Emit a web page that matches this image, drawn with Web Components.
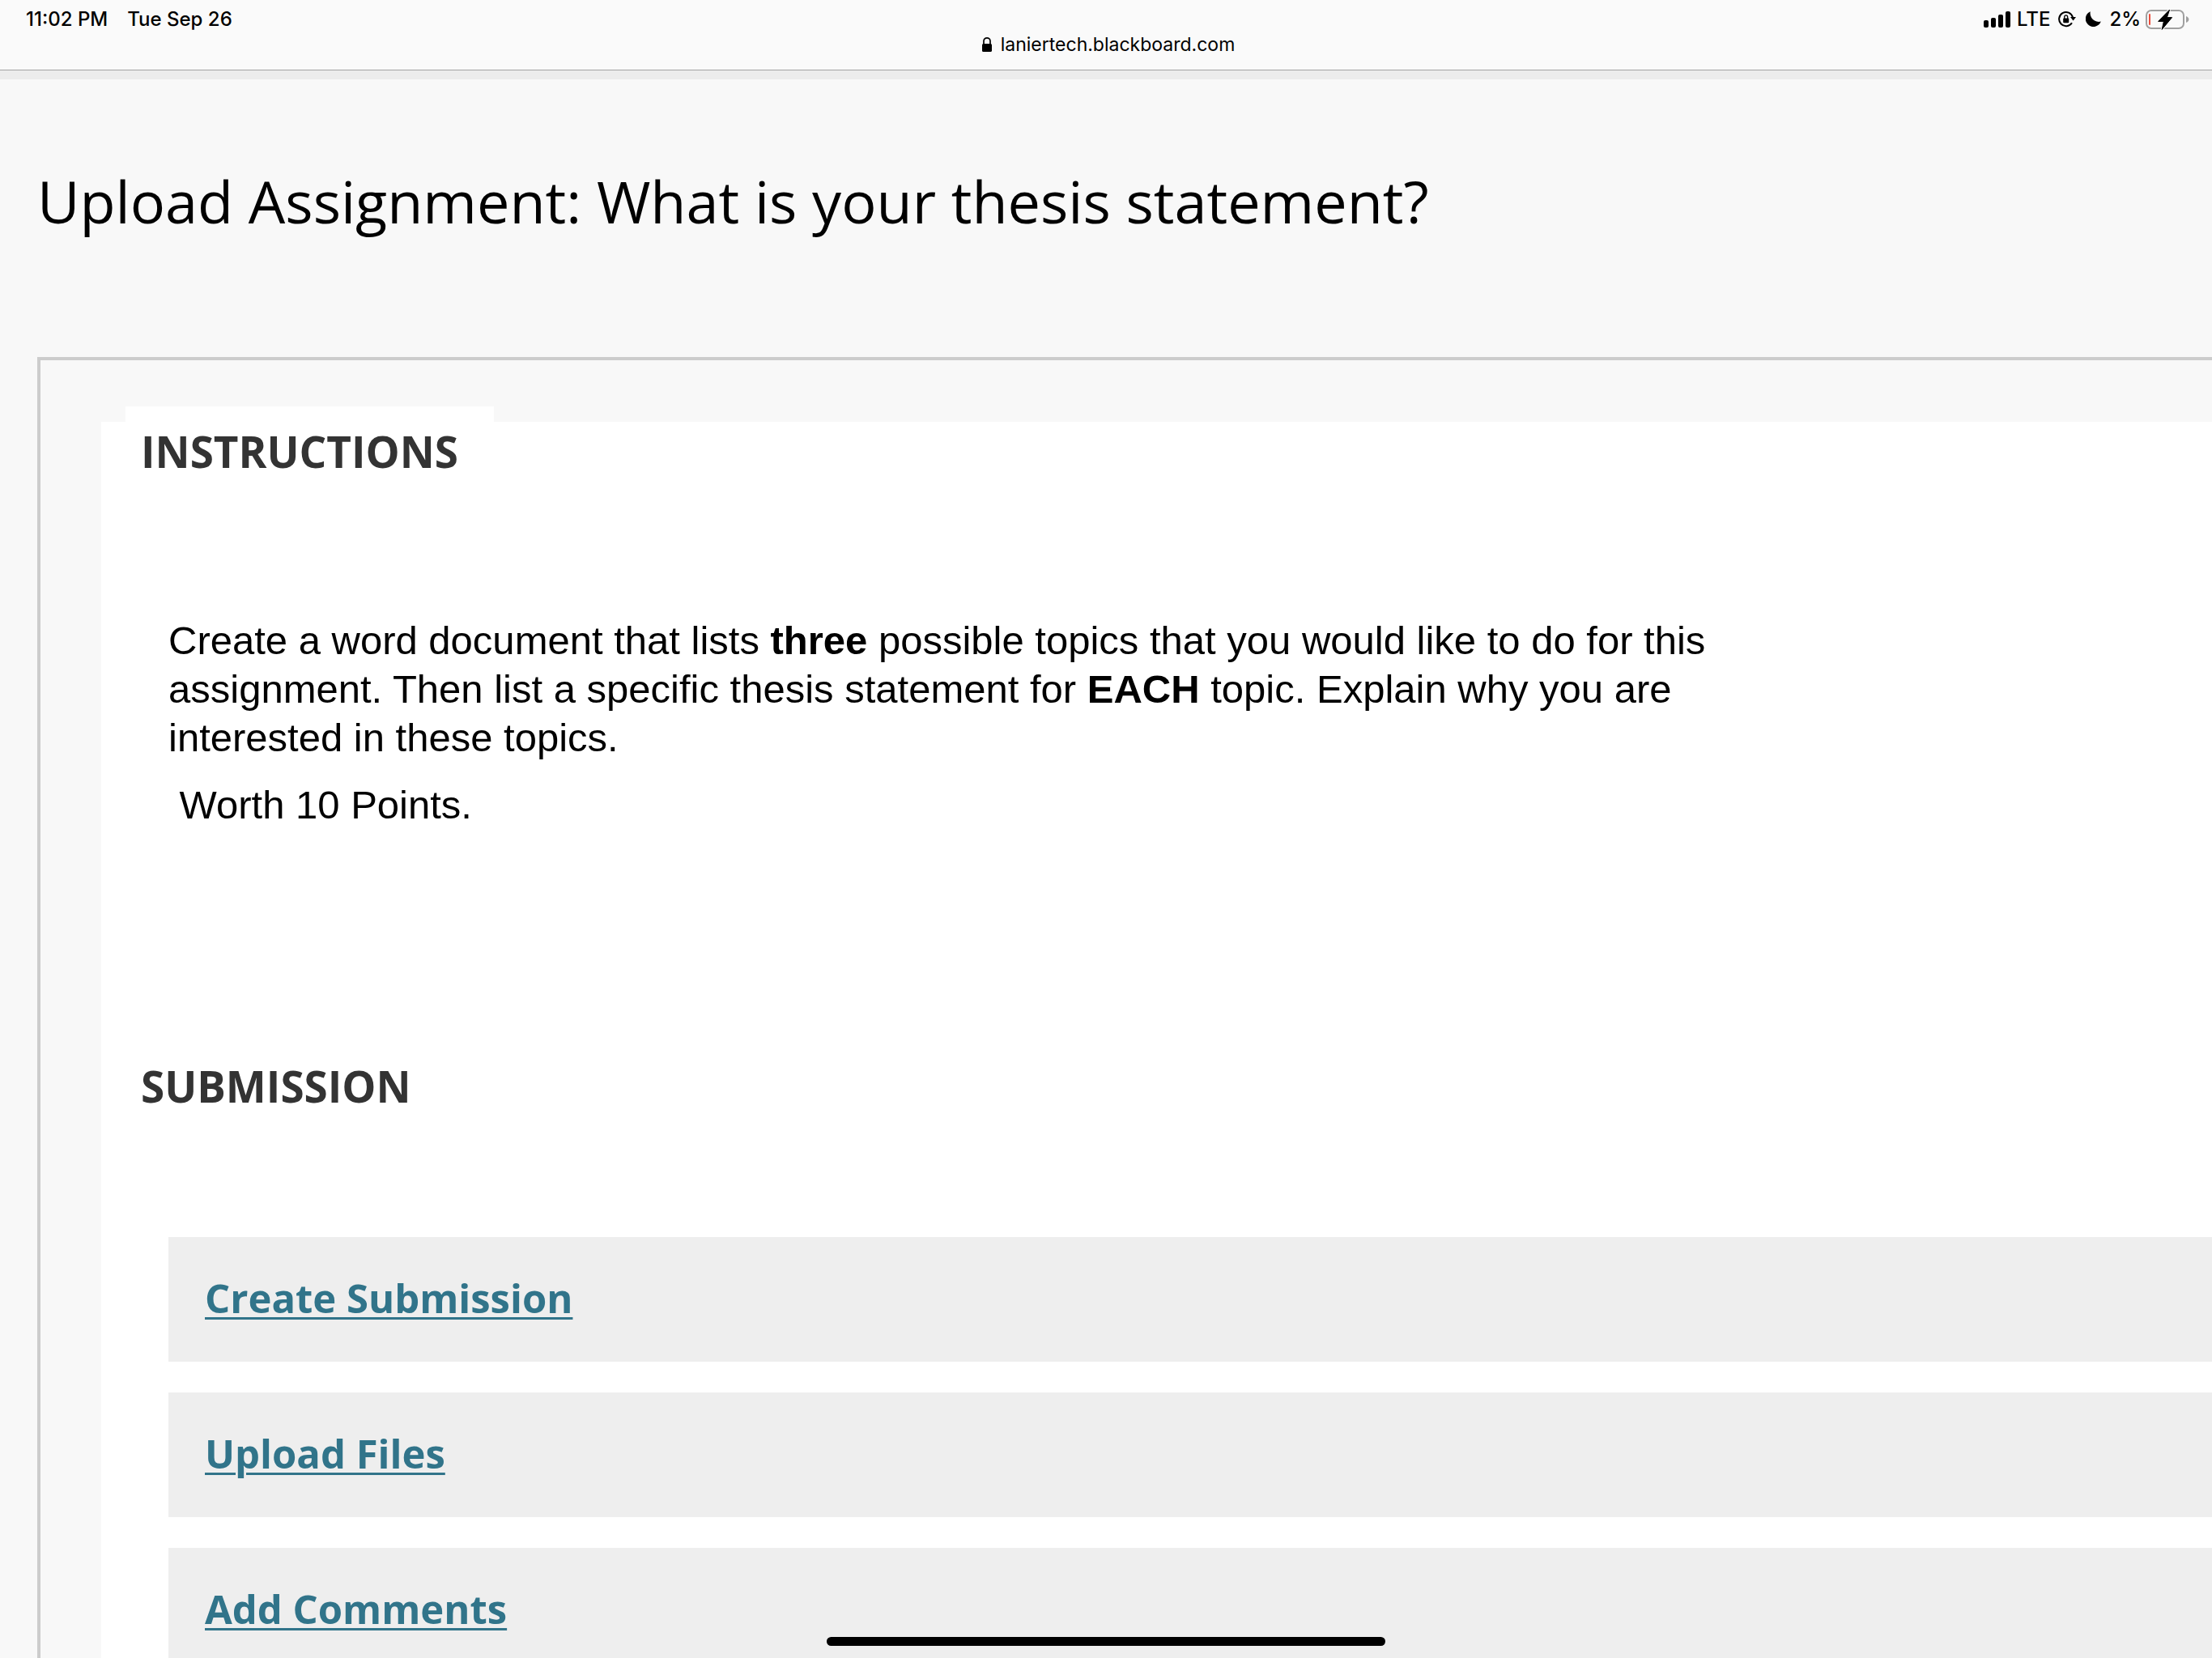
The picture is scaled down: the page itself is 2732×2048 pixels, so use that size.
<!DOCTYPE html>
<html lang="en">
<head>
<meta charset="utf-8">
<title>Upload Assignment: What is your thesis statement?</title>
<style>
    body {
        margin: 0;
        background: #f8f8f8;
        color: #000;
        font-family: 'Open Sans', 'Liberation Sans', sans-serif;
    }
</style>
</head>
<body>
<tablet-screen>
    <status-bar slot="bar" time="11:02 PM" date="Tue Sep 26" battery="2%">laniertech.blackboard.com</status-bar>
    <assignment-page>
        <span slot="title">Upload Assignment: What is your thesis statement?</span>
        <assignment-step heading="Instructions">
            <instruction-text>
                <p>
                    Create a word document that lists <b>three</b> possible topics that you would like to do for this<br>
                    assignment. Then list a specific thesis statement for <b>EACH</b> topic. Explain why you are<br>
                    interested in these topics.
                </p>
                <p>&nbsp;Worth 10 Points.</p>
            </instruction-text>
        </assignment-step>
        <assignment-step heading="Submission">
            <submission-row href="#create">Create Submission</submission-row>
            <submission-row href="#upload">Upload Files</submission-row>
            <submission-row href="#comments">Add Comments</submission-row>
        </assignment-step>
    </assignment-page>
</tablet-screen>

<script>
class BaseElement extends HTMLElement {
    connectedCallback() {
        this.root = this.attachShadow({ mode: 'open' });
        this.root.innerHTML = this.template;
    }
}

class TabletScreen extends BaseElement {
    get template() {
        return `
<style>
    :host {
        display: flex;
        flex-direction: column;
        height: 100vh;
        overflow: hidden;
    }
    main {
        flex: 1;
        min-height: 0;
        overflow: auto;
        scrollbar-width: none;
    }
    .home {
        position: fixed;
        bottom: 15px;
        left: 50%;
        width: 690px;
        height: 11px;
        margin-left: -345px;
        border-radius: 6px;
        background: #000;
    }
</style>
<slot name="bar"></slot>
<main><slot></slot></main>
<div class="home"></div>
`;
    }
}

class StatusBar extends BaseElement {
    get template() {
        return `
<style>
    :host {
        display: block;
        box-sizing: border-box;
        height: 98px;
        background: #ececec;
        font-family: Inter, 'Liberation Sans', sans-serif;
        font-size: 24px;
        line-height: 30px;
    }
    header {
        box-sizing: border-box;
        height: 87px;
        padding: 9px 28px 0 32px;
        border-bottom: 1px solid #a2a2a2;
        background: #fafafa;
    }
    .row, .left, .right, .address {
        display: flex;
        align-items: center;
    }
    .row {
        justify-content: space-between;
        font-weight: 500;
    }
    .left {
        gap: 24px;
    }
    .address {
        justify-content: center;
        gap: 11px;
        padding: 1px 0 0 2px;
        font-size: 23px;
    }
    svg {
        display: block;
    }
    .signal { margin-right: 7px; }
    .lock { margin: 0 12px 0 10px; }
    .moon { margin-right: 10px; }
    .battery { margin-left: 6px; }
</style>
<header>
    <div class="row">
        <div class="left">
            <span>${this.getAttribute('time')}</span>
            <span>${this.getAttribute('date')}</span>
        </div>
        <div class="right">
            <svg class="signal" width="34" height="30" viewBox="0 0 34 30">
                <rect x="0" y="16" width="6" height="9" rx="2"/>
                <rect x="9" y="13" width="6" height="12" rx="2"/>
                <rect x="18" y="9" width="6" height="16" rx="2"/>
                <rect x="27" y="5" width="6" height="20" rx="2"/>
            </svg>
            <span>LTE</span>
            <svg class="lock" width="22" height="30" viewBox="0 0 22 30">
                <path d="M17 19.2A8.6 8.6 0 1 1 18 12.2" fill="none" stroke="#000" stroke-width="2"/>
                <path d="M15 12h7l-3.4 4.6z"/>
                <rect x="6.2" y="13.6" width="7" height="5.6" rx="1"/>
                <path d="M7.7 14v-1.8a2 2.3 0 0 1 4 0V14" fill="none" stroke="#000" stroke-width="1.3"/>
            </svg>
            <svg class="moon" width="19" height="30" viewBox="0 0 19 30">
                <path d="M5.8 5.2A9.8 9.8 0 1 0 18.8 17.6A10.6 10.6 0 0 1 5.8 5.2z"/>
            </svg>
            <span>${this.getAttribute('battery')}</span>
            <svg class="battery" width="54" height="30" viewBox="0 0 54 30">
                <rect x="1" y="4" width="46" height="22" rx="6" fill="none" stroke="#a0a0a0" stroke-width="2"/>
                <path d="M50 11v8q3.4-1.4 3.4-4t-3.4-4z" fill="#a0a0a0"/>
                <rect x="4" y="8" width="2" height="14" rx="1" fill="#eb4e3d"/>
                <path d="M29.6 3L15.6 17.4h6.8L20.2 27.4L32.6 12.6h-6.2z" stroke="#fafafa" stroke-width="3"/>
                <path d="M29.6 3L15.6 17.4h6.8L20.2 27.4L32.6 12.6h-6.2z" stroke="#000" stroke-linejoin="round"/>
            </svg>
        </div>
    </div>
    <div class="address">
        <svg width="12" height="30" viewBox="0 0 12 30">
            <rect x="0" y="14" width="12" height="10" rx="1.6"/>
            <path d="M2 15v-4.2a4 4 0 0 1 8 0V15" fill="none" stroke="#000" stroke-width="1.7"/>
        </svg>
        <span><slot></slot></span>
    </div>
</header>
`;
    }
}

class AssignmentPage extends BaseElement {
    get template() {
        return `
<style>
    :host {
        display: block;
        padding: 101px 0 0 46px;
    }
    h1 {
        margin: 0 0 144px;
        font-size: 72px;
        font-weight: 400;
        line-height: 98px;
    }
    .frame {
        padding: 76px 0 0 75px;
        border: 4px solid #ccc;
        border-width: 4px 0 0 4px;
    }
    .panel {
        display: flow-root;
        min-height: 1600px;
        background: #fff;
    }
</style>
<h1><slot name="title"></slot></h1>
<div class="frame">
    <div class="panel"><slot></slot></div>
</div>
`;
    }
}

class AssignmentStep extends BaseElement {
    get template() {
        return `
<style>
    :host {
        display: flow-root;
        min-height: 784px;
        padding-left: 30px;
    }
    /* heading sits on a white tab that pokes out above the panel */
    h2 {
        width: fit-content;
        margin: -19px 0 0;
        padding: 18px 44px 20px 19px;
        background: #fff;
        color: #333;
        font-size: 53px;
        font-weight: 700;
        line-height: 76px;
        text-transform: uppercase;
    }
    .body {
        display: flex;
        flex-direction: column;
        gap: 38px;
        padding: 128px 0 0 53px;
    }
</style>
<h2>${this.getAttribute('heading')}</h2>
<div class="body"><slot></slot></div>
`;
    }
}

class InstructionText extends BaseElement {
    get template() {
        return `
<style>
    :host {
        display: block;
        max-width: 1940px;
        padding-top: 17px;
        font-family: 'Liberation Sans', Arial, sans-serif;
        font-size: 49px;
        line-height: 60px;
    }
    ::slotted(p) {
        margin: 0 0 23px;
    }
</style>
<slot></slot>
`;
    }
}

class SubmissionRow extends BaseElement {
    get template() {
        return `
<style>
    :host {
        display: block;
        padding: 42px 45px 46px;
        background: #eee;
        font-size: 49px;
        font-weight: 700;
        line-height: 66px;
    }
    a {
        color: #31748a;
        text-decoration-thickness: 3px;
        text-underline-offset: 5px;
    }
</style>
<a href="${this.getAttribute('href')}"><slot></slot></a>
`;
    }
}

customElements.define('tablet-screen', TabletScreen);
customElements.define('status-bar', StatusBar);
customElements.define('assignment-page', AssignmentPage);
customElements.define('assignment-step', AssignmentStep);
customElements.define('instruction-text', InstructionText);
customElements.define('submission-row', SubmissionRow);
</script>
</body>
</html>
